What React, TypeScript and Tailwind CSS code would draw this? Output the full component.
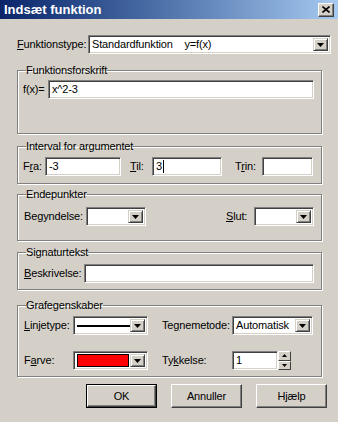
import React from "react";

const font = { fontFamily: '"Liberation Sans", Arial, sans-serif' };

function U({ children }: { children: React.ReactNode }) {
  return <span className="underline underline-offset-[1px]">{children}</span>;
}

function Sunken({ className = "", children }: { className?: string; children?: React.ReactNode }) {
  return (
    <div
      className={
        "relative flex items-center bg-white border border-t-[#808080] border-l-[#808080] border-b-white border-r-white shadow-[inset_1px_1px_0_#404040,inset_-1px_-1px_0_#d4d0c8] " +
        className
      }
    >
      {children}
    </div>
  );
}

function Arrow() {
  return (
    <svg width="7" height="4" viewBox="0 0 7 4">
      <path d="M0 0h7L3.5 4z" fill="#000" />
    </svg>
  );
}

function DropBtn() {
  return (
    <div className="absolute right-[2px] top-[2px] bottom-[2px] w-[15px] flex items-center justify-center bg-[#d4d0c8] border border-t-[#d4d0c8] border-l-[#d4d0c8] border-b-[#404040] border-r-[#404040] shadow-[inset_1px_1px_0_#fff,inset_-1px_-1px_0_#808080]">
      <Arrow />
    </div>
  );
}

function Combo({ className = "", children }: { className?: string; children?: React.ReactNode }) {
  return (
    <Sunken className={"h-[19px] " + className}>
      {children}
      <DropBtn />
    </Sunken>
  );
}

function Group({ title, className = "", children }: { title: string; className?: string; children?: React.ReactNode }) {
  return (
    <fieldset
      className={
        "border border-[#808080] shadow-[inset_1px_1px_0_#fff,1px_1px_0_#fff] w-[305px] px-[4px] " + className
      }
    >
      <legend className="ml-[4px] px-0 text-[11px] leading-[13px] text-black">{title}</legend>
      {children}
    </fieldset>
  );
}

function Button({ children, def = false }: { children: React.ReactNode; def?: boolean }) {
  return (
    <div
      className={
        "w-[71px] h-[24px] flex items-center justify-center text-[11px] bg-[#d4d0c8] " +
        (def ? "border border-black" : "")
      }
    >
      <div className="w-full h-full flex items-center justify-center border border-t-white border-l-white border-b-[#404040] border-r-[#404040] shadow-[inset_-1px_-1px_0_#808080]">
        {children}
      </div>
    </div>
  );
}

export default function App() {
  return (
    <div className="w-[338px] h-[422px] bg-[#d4d0c8] text-black overflow-hidden flex flex-col" style={font}>
      {/* Title bar */}
      <div className="h-[19px] flex items-center justify-between pl-[4px] pr-[4px] bg-gradient-to-r from-[#0a246a] to-[#a6caf0]">
        <span className="text-white font-bold text-[13px] leading-[15px]">Indsæt funktion</span>
        <div className="w-[16px] h-[14px] flex items-center justify-center bg-[#d4d0c8] border border-t-white border-l-white border-b-[#404040] border-r-[#404040] shadow-[inset_-1px_-1px_0_#808080]">
          <svg width="8" height="7" viewBox="0 0 8 7">
            <path d="M0.5 0.5L7.5 6.5M7.5 0.5L0.5 6.5" stroke="#000" strokeWidth="1.6" />
          </svg>
        </div>
      </div>

      <div className="flex flex-col pl-[17px] text-[11px] tracking-[-0.15px]">
        {/* Funktionstype row */}
        <div className="mt-[16px] flex items-center h-[19px]">
          <span className="w-[71px]">
            <U>F</U>unktionstype:
          </span>
          <Combo className="w-[243px]">
            <span className="pl-[3px]">Standardfunktion&nbsp;&nbsp;&nbsp;&nbsp;y=f(x)</span>
          </Combo>
        </div>

        {/* Funktionsforskrift */}
        <Group title="Funktionsforskrift" className="mt-[10px] h-[70px]">
          <div className="flex items-center mt-[3px]">
            <span className="w-[26px] pl-[1px]">f(x)=</span>
            <Sunken className="w-[266px] h-[19px]">
              <span className="pl-[3px]">x^2-3</span>
            </Sunken>
          </div>
        </Group>

        {/* Interval */}
        <Group title="Interval for argumentet" className="mt-[6px] h-[44px]">
          <div className="flex items-center mt-[4px]">
            <span className="w-[23px] pl-[1px]">
              F<U>r</U>a:
            </span>
            <Sunken className="w-[76px] h-[19px]">
              <span className="pl-[3px]">-3</span>
            </Sunken>
            <span className="ml-[9px] w-[22px]">
              <U>T</U>il:
            </span>
            <Sunken className="w-[70px] h-[19px]">
              <span className="pl-[3px]">3</span>
              <span className="w-[1px] h-[13px] bg-black ml-[1px]" />
            </Sunken>
            <span className="ml-[13px] w-[27px]">
              T<U>r</U>in:
            </span>
            <Sunken className="w-[51px] h-[19px]" />
          </div>
        </Group>

        {/* Endepunkter */}
        <Group title="Endepunkter" className="mt-[4px] h-[53px]">
          <div className="flex items-center mt-[6px] pl-[2px]">
            <span className="w-[62px]">
              Be<U>g</U>yndelse:
            </span>
            <Combo className="w-[60px]" />
            <span className="ml-[80px] w-[28px]">
              <U>S</U>lut:
            </span>
            <Combo className="w-[60px]" />
          </div>
        </Group>

        {/* Signaturtekst */}
        <Group title="Signaturtekst" className="mt-[5px] h-[44px]">
          <div className="flex items-center mt-[5px] pl-[2px]">
            <span className="w-[60px]">
              <U>B</U>eskrivelse:
            </span>
            <Sunken className="w-[230px] h-[19px]" />
          </div>
        </Group>

        {/* Grafegenskaber */}
        <Group title="Grafegenskaber" className="mt-[9px] h-[78px]">
          <div className="flex items-center mt-[4px] pl-[2px]">
            <span className="w-[49px]">
              <U>L</U>injetype:
            </span>
            <Combo className="w-[75px]">
              <span className="ml-[3px] w-[53px] h-[2px] bg-black" />
            </Combo>
            <span className="ml-[14px] w-[70px]">
              Te<U>g</U>nemetode:
            </span>
            <Combo className="w-[81px]">
              <span className="pl-[3px]">Automatisk</span>
            </Combo>
          </div>
          <div className="flex items-center mt-[16px] pl-[2px]">
            <span className="w-[49px]">
              F<U>a</U>rve:
            </span>
            <Combo className="w-[75px]">
              <span className="ml-[3px] w-[52px] h-[13px] bg-[#ff0000] border border-black" />
            </Combo>
            <span className="ml-[14px] w-[70px]">
              Ty<U>k</U>kelse:
            </span>
            <Sunken className="w-[46px] h-[19px]">
              <span className="pl-[3px]">1</span>
            </Sunken>
            <div className="flex flex-col h-[19px] w-[13px]">
              <div className="flex-1 flex items-center justify-center bg-[#d4d0c8] border border-t-white border-l-white border-b-[#404040] border-r-[#404040]">
                <svg width="5" height="3" viewBox="0 0 5 3"><path d="M0 3h5L2.5 0z" fill="#000" /></svg>
              </div>
              <div className="flex-1 flex items-center justify-center bg-[#d4d0c8] border border-t-white border-l-white border-b-[#404040] border-r-[#404040]">
                <svg width="5" height="3" viewBox="0 0 5 3"><path d="M0 0h5L2.5 3z" fill="#000" /></svg>
              </div>
            </div>
          </div>
        </Group>

        {/* Buttons */}
        <div className="flex mt-[7px] pl-[69px] gap-[14px]">
          <Button def>OK</Button>
          <Button>Annuller</Button>
          <Button>Hjælp</Button>
        </div>
      </div>
    </div>
  );
}
